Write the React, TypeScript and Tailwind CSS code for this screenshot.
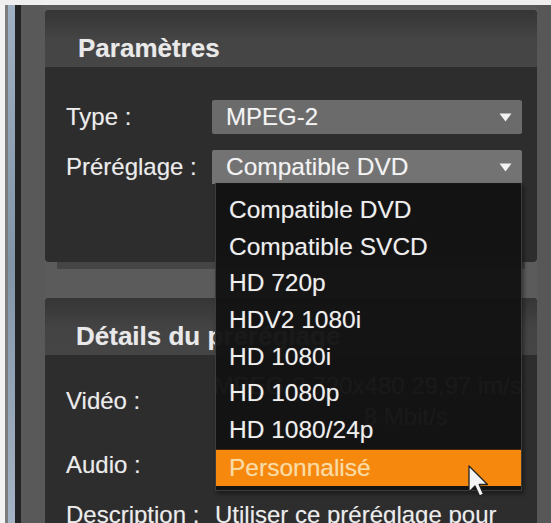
import React from "react";

const font = { fontFamily: '"Liberation Sans", Arial, sans-serif' };

function Arrow() {
  return (
    <svg width="13" height="9" viewBox="0 0 13 9" className="shrink-0">
      <path d="M0.5 0.5 L12.5 0.5 L6.5 8.5 Z" fill="#f2f2f2" />
    </svg>
  );
}

function Cursor() {
  return (
    <svg width="24" height="36" viewBox="0 0 24 36" className="absolute left-[251px] top-[15px]">
      <path
        d="M2 1 L2 27 L8 21 L12.5 31 L16.5 29.2 L12.2 19.5 L20.5 19.5 Z"
        fill="#f4f4f4"
        stroke="#222"
        strokeWidth="1.3"
        strokeLinejoin="round"
      />
    </svg>
  );
}

const items = [
  "Compatible DVD",
  "Compatible SVCD",
  "HD 720p",
  "HDV2 1080i",
  "HD 1080i",
  "HD 1080p",
  "HD 1080/24p",
];

export default function App() {
  return (
    <div
      className="w-[551px] h-[523px] overflow-hidden bg-[#5b5b5b] flex flex-col text-[#ececec] text-[24px] [text-shadow:0_0_1px_rgba(255,255,255,0.3)]"
      style={font}
    >
      <div className="h-[5px] shrink-0 bg-[#efefef]" />
      <div className="flex flex-1 min-h-0">
        <div className="w-[5px] bg-[#f2f2f2]" />
        <div className="w-[3px] bg-[#7c7c7c]" />
        <div className="w-[7px] bg-gradient-to-b from-[#9fb0c2] via-[#8295a8] to-[#a5b4c4]" />
        <div className="w-[6px] bg-[#242424]" />
        <div className="w-[24px] bg-[#595959]" />
        {/* main column */}
        <div className="w-[492px] flex flex-col pt-[5px]">
          {/* Panel 1 */}
          <div className="relative z-10 h-[252px] shrink-0 rounded-[4px] bg-[#2d2d2d] flex flex-col">
            <div className="h-[57px] shrink-0 rounded-t-[4px] bg-gradient-to-b from-[#353535] via-[#444444] to-[#464646] pl-[33px] pt-[25px]">
              <div className="text-[26px] leading-[26px] font-bold text-[#e9e9e9]">Paramètres</div>
            </div>
            <div className="flex flex-col gap-[16px] pl-[21px] pr-[15px] pt-[33px]">
              <div className="flex items-center h-[34px]">
                <div className="w-[146px] leading-[34px]">Type :</div>
                <div className="flex-1 h-[34px] rounded-[2px] bg-[#6b6b6b] flex items-center justify-between pl-[14px] pr-[10px] leading-[34px] text-[#f3f3f3]">
                  <span>MPEG-2</span>
                  <Arrow />
                </div>
              </div>
              <div className="flex items-center h-[34px]">
                <div className="w-[146px] leading-[34px]">Préréglage :</div>
                <div className="relative flex-1 h-[34px]">
                  <div className="h-[34px] rounded-t-[2px] bg-[#737373] flex items-center justify-between pl-[14px] pr-[10px] leading-[34px] text-[#f3f3f3]">
                    <span className="text-[24.5px]">Compatible DVD</span>
                    <Arrow />
                  </div>
                  {/* dropdown list */}
                  <div className="absolute left-[3px] right-0 top-[33px] z-20 bg-[rgba(19,19,19,0.97)] border border-[#3c3c3c] border-t-0 pt-[9px] pb-[4px] shadow-[2px_3px_4px_rgba(0,0,0,0.4)] text-[24.5px]">
                    {items.map((t) => (
                      <div key={t} className="h-[36.7px] leading-[36.7px] pl-[13px] text-[#efefef]">
                        {t}
                      </div>
                    ))}
                    <div className="relative h-[36.7px] leading-[36px] pl-[13px] bg-[#f6890d] border-t border-[#4a2406] text-[#f9dca6]">
                      Personnalisé
                      <Cursor />
                    </div>
                  </div>
                </div>
              </div>
            </div>
          </div>
          {/* shadow band */}
          <div className="h-[7px] shrink-0 mx-[12px] bg-[#454545]" />
          <div className="h-[29px] shrink-0" />
          {/* Panel 2 */}
          <div className="flex-1 rounded-t-[4px] bg-[#2d2d2d] flex flex-col">
            <div className="h-[57px] shrink-0 rounded-t-[4px] bg-gradient-to-b from-[#353535] via-[#434343] to-[#454545] pl-[31px] pt-[25px]">
              <div className="text-[26px] leading-[26px] font-bold text-[#e9e9e9]">Détails du préréglage</div>
            </div>
            <div className="flex flex-col gap-[16px] pl-[21px] pr-[15px] pt-[15px]">
              <div className="flex items-center h-[62px]">
                <div className="w-[149px] leading-[34px]">Vidéo :</div>
                <div className="flex-1 flex flex-col leading-[31px] text-[#d0d0d0] whitespace-nowrap">
                  <span>MPEG-2 720x480 29,97 im/s</span>
                  <span className="pl-[150px]">8 Mbit/s</span>
                </div>
              </div>
              <div className="flex items-center h-[34px]">
                <div className="w-[149px] leading-[34px]">Audio :</div>
                <div className="flex-1 leading-[34px] text-[#cfcfcf]">Dolby Digital 2 canaux</div>
              </div>
              <div className="flex items-center h-[34px]">
                <div className="w-[149px] leading-[34px] whitespace-nowrap">Description :</div>
                <div className="flex-1 leading-[34px] whitespace-nowrap">Utiliser ce préréglage pour</div>
              </div>
            </div>
          </div>
        </div>
        <div className="flex-1 bg-[#575757]" />
      </div>
    </div>
  );
}
